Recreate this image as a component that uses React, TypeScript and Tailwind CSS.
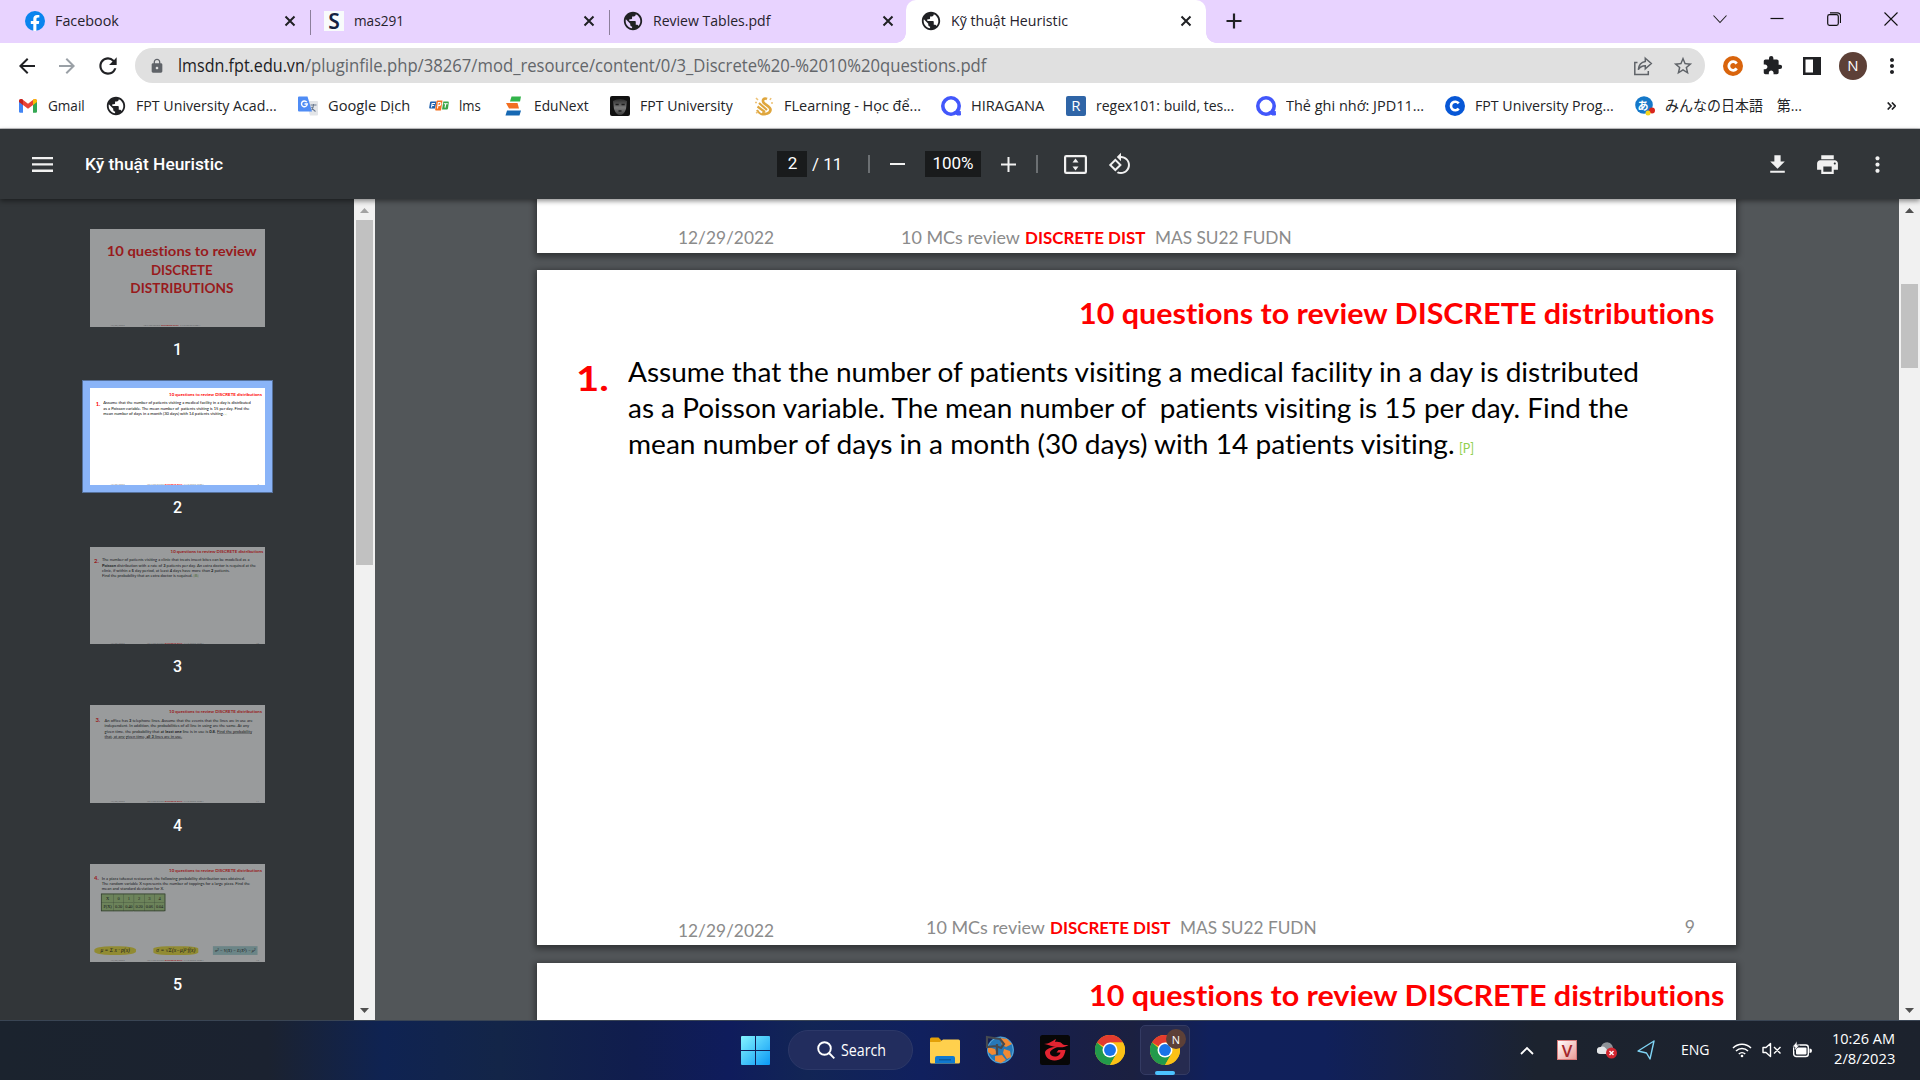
import { useLayoutEffect, useRef, type ReactNode } from "react";
import { MdPublic, MdArrowBack, MdArrowForward, MdRefresh, MdLock, MdStarBorder, MdExtension, MdMoreVert } from "react-icons/md";

/** One line of text, condensed or widened to fill the width of its box. */
function Fit({ className = "", children }: { className?: string; children: ReactNode }) {
  const box = useRef<HTMLSpanElement>(null);
  const line = useRef<HTMLSpanElement>(null);
  useLayoutEffect(() => {
    if (!box.current || !line.current) return;
    line.current.style.transform = `scaleX(${box.current.clientWidth / line.current.offsetWidth})`;
  }, []);
  return (
    <span ref={box} className={`block shrink-0 whitespace-pre ${className}`}>
      <span ref={line} className="inline-block origin-left">
        {children}
      </span>
    </span>
  );
}

const TabClose = () => (
  <svg viewBox="0 0 12 12" className="size-3 shrink-0" stroke="#202124" strokeWidth="2" fill="none">
    <path d="M1.5 1.5l9 9M10.5 1.5l-9 9" />
  </svg>
);

const FacebookIcon = () => (
  <svg viewBox="0 0 20 20" className="size-5 shrink-0">
    <circle cx="10" cy="10" r="10" fill="#0b84ee" />
    <path d="M13.8 12.9l.45-2.9h-2.8V8.1c0-.8.4-1.55 1.65-1.55h1.25V4.1s-1.15-.2-2.25-.2c-2.3 0-3.8 1.4-3.8 3.9V10H5.8v2.9h2.5V20a10 10 0 003.1 0v-7.1z" fill="#fff" />
  </svg>
);

const SIcon = () => (
  <span className="grid size-5 shrink-0 place-items-center bg-[#f8fbfb] font-['Noto_Sans'] text-[21px] font-semibold leading-none text-[#14213f]">S</span>
);

const Globe = () => <MdPublic className="size-[22px] shrink-0 -mx-px text-[#202124]" />;

function Tab({ className, icon, title, w }: { className: string; icon: ReactNode; title: string; w: string }) {
  return (
    <div className={`flex h-[43px] shrink-0 items-center pb-[2px] ${className}`}>
      {icon}
      <Fit className={`mb-px ml-2.5 font-['Open_Sans'] text-[15px] leading-5 text-[#26222c] ${w}`}>{title}</Fit>
      <span className="ml-auto" />
      <TabClose />
    </div>
  );
}

function TabStrip() {
  return (
    <div className="flex h-[43px] bg-[#e8d3ff]">
      <Tab className="w-[285px] ml-[25px] pr-[14px]" icon={<FacebookIcon />} title="Facebook" w="w-[64px]" />
      <span className="mt-2.5 h-[25px] w-px bg-[#8c7f9b]" />
      <Tab className="w-[298px] pl-[13px] pr-[14px]" icon={<SIcon />} title="mas291" w="w-[50px]" />
      <span className="mt-2.5 h-[25px] w-px bg-[#8c7f9b]" />
      <Tab className="w-[296px] pl-[13px] pr-[12px]" icon={<Globe />} title="Review Tables.pdf" w="w-[117px]" />
      <div className="relative w-[300px] rounded-t-[10px] bg-white">
        <span className="absolute -left-2.5 bottom-0 size-2.5 bg-[radial-gradient(circle_at_0_0,transparent_9.5px,#fff_10px)]" />
        <span className="absolute -right-2.5 bottom-0 size-2.5 bg-[radial-gradient(circle_at_100%_0,transparent_9.5px,#fff_10px)]" />
        <Tab className="w-[300px] pl-[15px] pr-[14px]" icon={<Globe />} title="Kỹ thuật Heuristic" w="w-[117px]" />
      </div>
      <svg viewBox="0 0 16 16" className="ml-5 mt-[13px] size-4" stroke="#202124" strokeWidth="2.2" fill="none">
        <path d="M8 .5v15M.5 8h15" />
      </svg>
      <svg viewBox="0 0 14 14" className="ml-auto mt-3 size-3.5" stroke="#222" strokeWidth="1.1" fill="none">
        <path d="M.5 3.500L7 10.500l6.500-7" />
      </svg>
      <svg viewBox="0 0 14 14" className="ml-[43px] mt-3 size-3.5" stroke="#111" strokeWidth="1.2" fill="none">
        <path d="M.5 6.500h13" />
      </svg>
      <svg viewBox="0 0 14 14" className="ml-[43px] mt-3 size-3.5" stroke="#111" strokeWidth="1.2" fill="none">
        <rect x=".7" y="2.7" width="10.6" height="10.6" rx="1.8" />
        <path d="M3 .8h7.500a3 3 0 013 3V11" />
      </svg>
      <svg viewBox="0 0 14 14" className="ml-[43px] mr-[22px] mt-3 size-3.5" stroke="#111" strokeWidth="1.1" fill="none">
        <path d="M.5 .5l13 13M13.500 .5l-13 13" />
      </svg>
    </div>
  );
}

function AddressBar() {
  return (
    <div className="flex h-[45px] items-center bg-white text-[#202124]">
      <MdArrowBack className="ml-[15px] size-6" />
      <MdArrowForward className="ml-4 size-6 text-[#9aa0a6]" />
      <MdRefresh className="ml-4 size-[26px]" />
      <div className="ml-[14px] flex h-[35px] w-[1570px] items-center rounded-full bg-[#e0e0e0] pl-[14px] pr-[11px] font-['Open_Sans'] text-[17.5px] leading-6">
        <MdLock className="size-4 text-[#5f6368]" />
        <Fit className="mb-0.5 ml-[13px] w-[127px]">lmsdn.fpt.edu.vn</Fit>
        <Fit className="mb-0.5 w-[681px] text-[#63666a]">/pluginfile.php/38267/mod_resource/content/0/3_Discrete%20-%2010%20questions.pdf</Fit>
        <svg viewBox="0 0 20 20" className="ml-auto size-5" stroke="#5f6368" strokeWidth="1.5" fill="none">
          <path d="M4.500 6.500H1.800v12h13.500v-3.500M12.300 2.200l6 5.300-6 5.300V9.700C9 9.700 6.900 10.800 5.300 13.700c.4-4.500 2.800-7.700 7-8.300z" />
        </svg>
        <MdStarBorder className="ml-[19px] size-[22px] text-[#5f6368]" />
      </div>
      <svg viewBox="0 0 20 20" className="ml-[18px] size-5">
        <circle cx="10" cy="10" r="10" fill="#d9640c" />
        <path d="M13.700 12.400a4.300 4.300 0 110-4.800" stroke="#fff" strokeWidth="2.800" fill="none" />
      </svg>
      <MdExtension className="ml-[19px] size-[21px]" />
      <svg viewBox="0 0 18 18" className="ml-[20px] size-[18px]">
        <path d="M0 0h18v18H0zM2.500 2.500v13h7.500v-13z" fill="#202124" fillRule="evenodd" />
      </svg>
      <span className="ml-[18px] grid size-7 place-items-center rounded-full bg-[#5d4037] font-['Open_Sans'] text-[15px] text-white">N</span>
      <MdMoreVert className="ml-[13px] size-6" />
    </div>
  );
}

const QIcon = () => (
  <svg viewBox="0 0 20 20" className="size-5 shrink-0" fill="none" stroke="#4257fb" strokeWidth="3.600">
    <circle cx="10" cy="10" r="8.200" />
    <path d="M13 15.500l3 3.500h3.500l-.3-4" fill="#4257fb" strokeWidth="1" />
  </svg>
);

const bookmarks: { label: string; slot: string; w: string; icon: ReactNode }[] = [
  {
    label: "Gmail", slot: "w-[88px]", w: "w-[37px]",
    icon: (
      <svg viewBox="0 0 20 20" className="size-5 shrink-0">
        <path d="M1 5v10.500c0 .8.500 1.200 1.200 1.200H5V8z" fill="#4285f4" />
        <path d="M15 8v8.700h2.800c.7 0 1.200-.4 1.200-1.200V5z" fill="#34a853" />
        <path d="M1 5.200C1 3.300 3 2.500 4.500 3.500L10 7.700l5.500-4.200C17 2.500 19 3.300 19 5.200L15 9l-5 3.700L5 9z" fill="#ea4335" />
        <path d="M15 4v5l4-3V5.200c0-1.900-2-2.700-3.500-1.700z" fill="#fbbc04" />
        <path d="M1 5.200V6l4 3V4l-.5-.5C3 2.500 1 3.300 1 5.200z" fill="#c5221f" />
      </svg>
    ),
  },
  { label: "FPT University Acad...", slot: "w-[192px]", w: "w-[141px]", icon: <Globe /> },
  {
    label: "Google Dịch", slot: "w-[131px]", w: "w-[82px]",
    icon: (
      <svg viewBox="0 0 20 20" className="size-5 shrink-0">
        <path d="M8 5h11a1 1 0 011 1v12.500a1 1 0 01-1 1h-7z" fill="#e3e5e8" />
        <path d="M1 .5h8.500L14 15.500H1a1 1 0 01-1-1v-13a1 1 0 011-1z" fill="#4f8cf5" />
        <path d="M8.800 6.200A2.900 2.900 0 109.300 8H6.500" stroke="#fff" strokeWidth="1.400" fill="none" />
        <path d="M12.500 9h6M15.500 8v1c0 2-1.500 4-2 4.500M13.500 11c1 2 2.500 3.500 4 4.500" stroke="#6b7a90" strokeWidth="1.100" fill="none" />
      </svg>
    ),
  },
  {
    label: "lms", slot: "w-[75px]", w: "w-[22px]",
    icon: (
      <svg viewBox="0 0 20 20" className="size-5 shrink-0">
        <path d="M2 5.500h5.500L6 12.500H1q-1 0-.8-1L1 6.500q.2-1 1-1z" fill="#1d5fae" />
        <path d="M8.500 4.500h5L12 14.500H7q-1 0-.8-1L7.500 5.500q.2-1 1-1z" fill="#f37021" />
        <path d="M14.300 5.500H19q1 0 .8 1l-.8 6q-.2 1-1 1h-5z" fill="#3aa648" />
        <path d="M2.500 11.500l.6-4h3M2.800 9.500h2.400M8.500 12.500L9.300 6.500q3-.3 2.500 1.500T9 9.800M14.800 7.700h4M16.800 7.700l-.8 4" stroke="#fff" strokeWidth="1.100" fill="none" />
      </svg>
    ),
  },
  {
    label: "EduNext", slot: "w-[106px]", w: "w-[55px]",
    icon: (
      <svg viewBox="0 0 20 20" className="size-5 shrink-0">
        <path d="M7.500 .5H17l-1 5H6z" fill="#32b44a" />
        <path d="M2 7h11.500l1.500 5.500H5z" fill="#f26f21" />
        <path d="M3 14.500h14l-1.500 5H1.500z" fill="#1668b3" />
      </svg>
    ),
  },
  {
    label: "FPT University", slot: "w-[144px]", w: "w-[93px]",
    icon: (
      <svg viewBox="0 0 20 20" className="size-5 shrink-0">
        <defs>
          <linearGradient id="face" x1="0" y1="0" x2="0" y2="1">
            <stop stopColor="#2a2a2a" />
            <stop offset=".55" stopColor="#7a7a7a" />
            <stop offset="1" stopColor="#3a3a3a" />
          </linearGradient>
        </defs>
        <rect width="20" height="20" rx="2" fill="#111" />
        <path d="M3 5q7-4 14 0l-1 8q-2 6-6 6t-6-6z" fill="url(#face)" />
        <path d="M5.500 8.500h3.200M11.500 8.500h3.200M8.500 15h3" stroke="#1c1c1c" strokeWidth="1.300" />
      </svg>
    ),
  },
  {
    label: "FLearning - Học để...", slot: "w-[187px]", w: "w-[137px]",
    icon: (
      <svg viewBox="0 0 20 20" className="size-5 shrink-0" fill="none" stroke="#dfa63d">
        <path d="M13 3c-3-1.500-5 1-3.500 3.500S17 10.500 16.500 14s-5 5-8.500 3" strokeWidth="2.600" />
        <path d="M5 7l8 7M3.500 10.500l7.500 5.500M3 14c2 4 6 5 9 4" strokeWidth="2.200" />
        <path d="M2 2l2 2M17 2l-1 2M1 6.500h2M17 7h2M2 17l2-1" strokeWidth="1.600" stroke="#edc277" />
      </svg>
    ),
  },
  { label: "HIRAGANA", slot: "w-[125px]", w: "w-[73px]", icon: <QIcon /> },
  {
    label: "regex101: build, tes...", slot: "w-[190px]", w: "w-[138px]",
    icon: <span className="grid size-5 shrink-0 place-items-center rounded-[2px] bg-[#2f65a7] font-['Open_Sans'] text-[15px] leading-none text-white">R</span>,
  },
  { label: "Thẻ ghi nhớ: JPD11...", slot: "w-[189px]", w: "w-[138px]", icon: <QIcon /> },
  {
    label: "FPT University Prog...", slot: "w-[190px]", w: "w-[139px]",
    icon: (
      <svg viewBox="0 0 20 20" className="size-5 shrink-0">
        <circle cx="10" cy="10" r="10" fill="#0757d6" />
        <path d="M13.700 12.600a4.300 4.300 0 110-5.200" stroke="#fff" strokeWidth="2.600" fill="none" />
      </svg>
    ),
  },
  {
    label: "みんなの日本語　第...", slot: "w-[180px]", w: "w-[137px]",
    icon: (
      <span className="relative grid size-5 shrink-0 place-items-center">
        <svg viewBox="0 0 20 20" className="absolute inset-0 size-5">
          <circle cx="9" cy="9" r="8.800" fill="#1578c9" />
          <circle cx="17" cy="14.500" r="3" fill="#d9261c" />
          <circle cx="13" cy="17" r="2.500" fill="#f7d51d" />
        </svg>
        <span className="relative mr-1 font-['Noto_Sans_CJK_JP'] text-[11px] font-bold leading-none text-white">あ</span>
      </span>
    ),
  },
];

function BookmarksBar() {
  return (
    <div className="flex h-[41px] items-center border-b border-[#c4c4c6] bg-white pb-[5px] pl-[18px]">
      {bookmarks.map((b) => (
        <div key={b.label} className={`flex shrink-0 items-center gap-2.5 ${b.slot}`}>
          {b.icon}
          <Fit className={`mb-0.5 font-['Open_Sans','Noto_Sans_CJK_JP'] text-[15px] leading-5 text-[#232427] ${b.w}`}>{b.label}</Fit>
        </div>
      ))}
      <svg viewBox="0 0 9 8" className="ml-auto mr-6 h-2 w-[9px]" stroke="#202124" strokeWidth="1.700" fill="none">
        <path d="M.7 .5L4 4 .7 7.500M4.900 .5L8.200 4 4.900 7.500" />
      </svg>
    </div>
  );
}

function PdfToolbar() {
  return (
    <div className="relative z-10 flex h-[70px] items-center bg-[#323639] font-[Roboto] text-[#f1f1f1] shadow-[0_2px_5px_rgba(0,0,0,0.45)]">
      <svg viewBox="0 0 21 15" className="ml-8 h-[15px] w-[21px]" fill="#f1f1f1">
        <path d="M0 0h21v2.300H0zM0 6.300h21v2.300H0zM0 12.600h21V15H0z" />
      </svg>
      <Fit className="ml-8 w-[138px] text-[17px] font-medium leading-5 text-white">Kỹ thuật Heuristic</Fit>
      <span className="ml-[554px] grid h-[26px] w-[30px] place-items-center bg-[#191b1c] pb-px pl-px text-[17px] leading-none text-white">2</span>
      <Fit className="mb-px ml-[5px] w-[30px] text-[17px] leading-5 text-white">/ 11</Fit>
      <span className="ml-[26px] h-[18px] w-[2px] bg-[#6c7073]" />
      <span className="ml-5 h-[2px] w-[15px] bg-[#f1f1f1]" />
      <span className="ml-5 grid h-[26px] w-14 place-items-center bg-[#191b1c] pb-0.5 text-[17px] leading-none text-white">100%</span>
      <svg viewBox="0 0 15 15" className="ml-5 size-[15px]" fill="#f1f1f1">
        <path d="M6.500 0h2v6.500H15v2H8.500V15h-2V8.500H0v-2h6.500z" />
      </svg>
      <span className="ml-5 h-[18px] w-[2px] bg-[#6c7073]" />
      <svg viewBox="0 0 23 19" className="ml-[26px] h-[19px] w-[23px]">
        <rect x="1.100" y="1.100" width="20.800" height="16.800" rx="1.200" stroke="#f1f1f1" strokeWidth="2.200" fill="none" />
        <path d="M8.500 7.500h6L11.500 3.500zM8.500 11.500h6L11.500 15.500z" fill="#f1f1f1" />
      </svg>
      <svg viewBox="0 0 24 24" className="ml-[21px] size-6" fill="#f1f1f1">
        <path d="M7.340 6.410L.86 12.900l6.490 6.480 6.490-6.480-6.500-6.490zM3.690 12.900l3.660-3.660L11 12.900l-3.660 3.660-3.650-3.660zm15.670-6.260C17.610 4.880 15.300 4 13 4V.76L8.760 5 13 9.240V6c1.790 0 3.580.68 4.950 2.050 2.730 2.730 2.730 7.170 0 9.900C16.580 19.320 14.790 20 13 20c-.97 0-1.940-.21-2.840-.61l-1.490 1.490C10.020 21.620 11.510 22 13 22c2.300 0 4.610-.88 6.360-2.640 3.520-3.510 3.520-9.210 0-12.720z" />
      </svg>
      <svg viewBox="0 0 24 24" className="ml-auto size-[25px]" fill="#f1f1f1">
        <path d="M19 9h-4V3H9v6H5l7 7 7-7zM5 18v2h14v-2H5z" />
      </svg>
      <svg viewBox="0 0 24 24" className="ml-[25px] size-[25px]" fill="#f1f1f1">
        <path d="M19 8H5c-1.660 0-3 1.340-3 3v6h4v4h12v-4h4v-6c0-1.660-1.340-3-3-3zm-3 11H8v-5h8v5zm3-7c-.55 0-1-.45-1-1s.45-1 1-1 1 .45 1 1-.45 1-1 1zm-1-9H6v4h12V3z" />
      </svg>
      <MdMoreVert className="ml-[25px] mr-[30px] size-[25px]" />
    </div>
  );
}

function SlideFooter({ first, page }: { first?: boolean; page?: string }) {
  return (
    <div className={`absolute bottom-0 left-0 flex w-full items-start pl-[141px] text-[17.5px] leading-6 text-[#8b8b8b] ${first ? "h-[27px]" : "h-[29px]"}`}>
      <Fit className={`w-24 ${first ? "" : "mt-[3px]"}`}>12/29/2022</Fit>
      <Fit className={`w-[119px] ${first ? "ml-[127px]" : "ml-[152px]"}`}>10 MCs review</Fit>
      <Fit className="ml-[5px] w-[120px] font-bold text-[#fe0000]">DISCRETE DIST</Fit>
      <Fit className="ml-[10px] w-[137px]">MAS SU22 FUDN</Fit>
      {page && <span className="ml-auto mr-[41px] -mt-px">{page}</span>}
    </div>
  );
}

const SlideTitle = ({ className }: { className: string }) => (
  <Fit className={`w-[635px] text-[28.5px] font-bold leading-10 text-[#fe0000] ${className}`}>10 questions to review DISCRETE distributions</Fit>
);

const SlideNumber = ({ className, children }: { className: string; children: string }) => (
  <Fit className={`-ml-1 w-[33px] text-[34px] font-bold leading-10 text-[#fe0000] ${className}`}>{children}</Fit>
);

const slideShell = "relative flex h-[675px] w-[1199px] shrink-0 flex-col overflow-hidden bg-white font-[Lato] text-black [font-variant-ligatures:none]";
const bodyText = "text-[26px] leading-9";

function CoverSlide() {
  return (
    <div className={slideShell}>
      <div className="mt-[85px] flex flex-col pl-[114px] text-[93px] font-bold leading-[128px] text-[#fe0000]">
        <Fit className="w-[1028px]">10 questions to review</Fit>
        <Fit className="ml-[304px] w-[422px]">DISCRETE</Fit>
        <Fit className="ml-[162px] w-[708px]">DISTRIBUTIONS</Fit>
      </div>
      <SlideFooter first />
    </div>
  );
}

function PoissonSlide() {
  return (
    <div className={slideShell}>
      <SlideTitle className="ml-[542px] mt-[23px]" />
      <div className="mt-[21px] flex pl-[43px]">
        <SlideNumber className="mt-1">1.</SlideNumber>
        <div className={`ml-[19px] ${bodyText}`}>
          <Fit className="w-[1011px]">Assume that the number of patients visiting a medical facility in a day is distributed</Fit>
          <Fit className="w-[1001px]">as a Poisson variable. The mean number of  patients visiting is 15 per day. Find the</Fit>
          <div className="flex">
            <Fit className="w-[827px]">mean number of days in a month (30 days) with 14 patients visiting.</Fit>
            <Fit className="ml-1 w-[15px] pt-[5px] text-[12.5px] text-[#92d050]">[P]</Fit>
          </div>
        </div>
      </div>
      <SlideFooter page="9" />
    </div>
  );
}

function ClinicSlide() {
  return (
    <div className={slideShell}>
      <SlideTitle className="ml-[552px] mt-[12px]" />
      <div className="mt-[18px] flex pl-8">
        <SlideNumber className="mt-1">2.</SlideNumber>
        <div className={`ml-[21px] ${bodyText}`}>
          <Fit className="w-[1010px]">The number of patients visiting a clinic that treats insect bites can be modelled as a</Fit>
          <Fit className="w-[1055px]"><b>Poisson</b> distribution with a rate of <b>3</b> patients per day. An extra doctor is required at the</Fit>
          <Fit className="w-[875px]">clinic, if within a <b>5</b> day period, at least <b>4</b> days have more than <b>2</b> patients.</Fit>
          <Fit className="w-[662px] underline">Find the probability that an extra doctor is required.<span className="text-[#5c9a26]"> [B]</span></Fit>
        </div>
      </div>
      <SlideFooter page="10" />
    </div>
  );
}

function TelephoneSlide() {
  return (
    <div className={slideShell}>
      <SlideTitle className="ml-[542px] mt-[23px]" />
      <div className="mt-[27px] flex pl-[41px]">
        <SlideNumber className="-mt-1">3.</SlideNumber>
        <div className={`ml-[30px] ${bodyText}`}>
          <Fit className="w-[1014px]">An office has <b>3</b> telephone lines. Assume that the events that the lines are in use are</Fit>
          <Fit className="w-[991px]">independent. In addition, the probabilities of all line in using are the same. At any</Fit>
          <Fit className="w-[1010px]">given time, the probability that <b>at least one</b> line is in use is <b>0.8</b>. <u>Find the probability</u></Fit>
          <Fit className="w-[532px]"><u>that, at any given time, <b>all 3</b> lines are in use.</u></Fit>
        </div>
      </div>
      <SlideFooter page="11" />
    </div>
  );
}

function PizzaSlide() {
  return (
    <div className={slideShell}>
      <SlideTitle className="ml-[542px] mt-[23px]" />
      <div className="mt-[18px] flex pl-8">
        <SlideNumber className="-mt-1">4.</SlideNumber>
        <div className={`ml-[19px] ${bodyText}`}>
          <Fit className="w-[982px]">In a pizza takeout restaurant, the following probability distribution was obtained.</Fit>
          <Fit className="w-[1016px]">The random variable X represents the number of toppings for a large pizza. Find the</Fit>
          <Fit className="w-[427px]">mean and standard deviation for X.</Fit>
        </div>
      </div>
      <div className="ml-[75px] mt-[14px] grid h-[120px] w-[441px] grid-cols-[82px_repeat(5,1fr)] border-4 border-[#1e2a16] bg-[#a6cf7c] text-center font-['Liberation_Serif'] text-[31px] leading-[56px]">
        {["X", "0", "1", "2", "3", "4", "P(X)", "0.30", "0.40", "0.20", "0.06", "0.04"].map((c) => (
          <span key={c} className="border border-[#33452a] tracking-tighter">{c}</span>
        ))}
      </div>
      <div className="mt-auto mb-[50px] flex h-[64px] items-center pl-[30px] font-['Liberation_Serif'] text-[38px] italic leading-[60px]">
        <span className="w-[285px] rounded-[40%] bg-[#f0df2c] text-center">μ = Σ x · p(x)</span>
        <span className="ml-[119px] w-[308px] rounded-[30%] bg-[#f0df2c] text-center">σ = √Σ(x−μ)²·f(x)</span>
        <span className="ml-[100px] w-[306px] bg-[#a5d3d4] text-center text-[30px]">σ² = V(X) = E(X²) − μ²</span>
      </div>
      <SlideFooter page="12" />
    </div>
  );
}

function Thumb({ n, active, children }: { n: number; active?: boolean; children: ReactNode }) {
  return (
    <div className="flex h-[158.8px] shrink-0 flex-col items-center">
      <div className={`p-2 ${active ? "bg-[#8ab4f8] shadow-[inset_0_0_0_1px_#56719b]" : ""}`}>
        <div className="h-[97.5px] w-[175px] overflow-hidden">
          <div className={`origin-top-left scale-[0.14595] ${active ? "" : "opacity-50"}`}>{children}</div>
        </div>
      </div>
      <span className="mt-[3px] font-[Roboto] text-[16px] font-medium leading-6 text-white">{n}</span>
    </div>
  );
}

function Scrollbar({ before, thumb, dimUp }: { before: string; thumb: string; dimUp?: boolean }) {
  return (
    <div className="flex w-[21px] shrink-0 flex-col items-center bg-[#f1f1f1]">
      <svg viewBox="0 0 9 5" className="mt-[9px] h-[5px] w-[9px] shrink-0" fill={dimUp ? "#a3a3a3" : "#505050"}>
        <path d="M4.500 0L9 5H0z" />
      </svg>
      <span className={`w-[17px] bg-[#c1c1c1] ${before} ${thumb}`} />
      <svg viewBox="0 0 9 5" className="mb-[7px] mt-auto h-[5px] w-[9px] shrink-0" fill="#505050">
        <path d="M4.500 5L9 0H0z" />
      </svg>
    </div>
  );
}

function Viewer() {
  const shadow = "shrink-0 shadow-[0_2px_6px_2px_rgba(0,0,0,0.4)]";
  return (
    <div className="flex h-[821px] overflow-hidden bg-[#525659]">
      <div className="flex w-[354px] flex-col items-start overflow-hidden bg-[#323639] pl-[82px] pt-[22px]">
        <Thumb n={1}><CoverSlide /></Thumb>
        <Thumb n={2} active><PoissonSlide /></Thumb>
        <Thumb n={3}><ClinicSlide /></Thumb>
        <Thumb n={4}><TelephoneSlide /></Thumb>
        <Thumb n={5}><PizzaSlide /></Thumb>
      </div>
      <Scrollbar before="mt-[7px]" thumb="h-[345px]" dimUp />
      <div className="flex w-[1524px] flex-col gap-[17px] overflow-hidden pl-[162px]">
        <div className={`relative h-[54px] w-[1199px] bg-white font-[Lato] [font-variant-ligatures:none] ${shadow}`}>
          <SlideFooter first />
        </div>
        <div className={`w-[1199px] ${shadow}`}><PoissonSlide /></div>
        <div className={`mt-px w-[1199px] ${shadow}`}><ClinicSlide /></div>
      </div>
      <Scrollbar before="mt-[71px]" thumb="h-[84px]" />
    </div>
  );
}

const Chrome = () => (
  <svg viewBox="0 0 48 48" className="size-[30px]">
    <circle cx="24" cy="24" r="24" fill="#fbc116" />
    <path d="M24 24L3.200 12A24 24 0 0144.800 12H24z" fill="#e33b2e" />
    <path d="M3.200 12A24 24 0 0024 48l10.400-18H24z" fill="#229a4b" />
    <path d="M24 48l10.400-18A12 12 0 0034.400 18 12 12 0 0024 12h20.800A24 24 0 0124 48z" fill="#fbc116" />
    <circle cx="24" cy="24" r="12" fill="#fff" />
    <circle cx="24" cy="24" r="9.500" fill="#1a73e8" />
  </svg>
);

function Taskbar() {
  return (
    <div className="flex h-[60px] items-center border-t border-[#3a4554] bg-[linear-gradient(90deg,#1b232e_0%,#1b2230_14%,#0f2352_20%,#132548_26%,#101d4e_33%,#0f1c5c_38%,#122555_42%,#10205e_48%,#161e4e_53%,#1b2040_59%,#10205c_63%,#10205a_69%,#182240_76%,#1c232f_80%,#1c222d_100%)] pb-px font-['Open_Sans'] text-white">
      <svg viewBox="0 0 29 29" className="ml-[741px] size-[29px]">
        <defs>
          <linearGradient id="win" x1="0" y1="0" x2="29" y2="29" gradientUnits="userSpaceOnUse">
            <stop stopColor="#84f4ff" />
            <stop offset="1" stopColor="#0a98f5" />
          </linearGradient>
        </defs>
        <path d="M1 0h13v14H0V1a1 1 0 011-1zM15 0h13a1 1 0 011 1v13H15zM0 15h14v14H1a1 1 0 01-1-1zM15 15h14v13a1 1 0 01-1 1H15z" fill="url(#win)" />
      </svg>
      <div className="ml-[18px] flex h-10 w-[125px] items-center rounded-full border border-[#2c3868] bg-[#222d5e] pl-7">
        <svg viewBox="0 0 18 18" className="size-[18px]" stroke="#fff" strokeWidth="1.900" fill="none">
          <circle cx="7.500" cy="7.500" r="6.300" />
          <path d="M12 12l5.300 5.300" />
        </svg>
        <Fit className="mb-px ml-[6px] w-[45px] text-[15.5px] leading-5">Search</Fit>
      </div>
      <svg viewBox="0 0 30 27" className="ml-[17px] h-[27px] w-[30px]">
        <path d="M0 2a1.500 1.500 0 011.500-1.500h7L12 4h2v4H0z" fill="#e3a007" />
        <path d="M0 5h10l3-2.500h15.500A1.500 1.500 0 0130 4v21a1.500 1.500 0 01-1.500 1.500h-27A1.500 1.500 0 010 25z" fill="#ffd04d" />
        <path d="M5 26.500V21a2 2 0 012-2h16a2 2 0 012 2v5.500z" fill="#1079cf" />
        <path d="M9 22.800h12" stroke="#0a5594" strokeWidth="1.200" />
      </svg>
      <svg viewBox="0 0 30 30" className="ml-[25px] size-[30px]">
        <circle cx="15.500" cy="15" r="13.500" fill="#2678b8" />
        <circle cx="15.500" cy="15" r="12.800" fill="none" stroke="#5ba6d8" strokeWidth="1" />
        <path d="M15 3l7 1 5 5-6 3-4-2zM3 12l7 2 2 5-5 1-4-3zM19 14l6 2 1 6-4 2-4-6zM10 21l7-1 4 5-5 3-6-2z" fill="#f08a35" />
        <path d="M2 2l13 2 4 5-3 4-5-2-9 1zM12 9v11" stroke="#464a50" strokeWidth="2.200" fill="none" />
      </svg>
      <svg viewBox="0 0 30 30" className="ml-[25px] size-[30px]">
        <rect width="30" height="30" rx="2.500" fill="#070707" />
        <path d="M4 9c5 0 8-3 12-5l-1 3c3-.5 6 0 8 2.500 2 .8 4 .6 5.500.5-3 2-6 2.500-10 2.200C12 12 9 9.500 4 9z" fill="#e32431" />
        <path d="M5 17c2-4 7-5.500 13-5-5 1.500-8 3.500-8 6 0 2.500 3 4 6 3.500 2.500-.5 4-2 4.500-4h-4l2-2.500h7c-1 7-4.500 10.500-11 10.500-6 0-9.500-4-9.500-8.500z" fill="#e32431" />
      </svg>
      <span className="ml-[25px]"><Chrome /></span>
      <div className="relative ml-[15px] grid h-[50px] w-[50px] place-items-center rounded-[5px] border border-[#343b63] bg-[#262b50]">
        <Chrome />
        <span className="absolute left-[25px] top-[3px] grid size-5 place-items-center rounded-full bg-[#5d4037] text-[11px] leading-none">N</span>
        <span className="absolute -bottom-px left-3.5 h-1 w-5 rounded-full bg-[#4cc2ff]" />
      </div>
      <svg viewBox="0 0 14 9" className="ml-[330px] h-[9px] w-3.5" stroke="#fff" strokeWidth="1.800" fill="none">
        <path d="M1 8l6-6 6 6" />
      </svg>
      <span className="ml-[23px] grid size-5 place-items-center border border-[#d77b7b] bg-linear-to-br from-white to-[#e79b97] text-[17px] font-semibold leading-none text-[#a3272b]">V</span>
      <svg viewBox="0 0 20 18" className="ml-5 h-[18px] w-5">
        <path d="M4 7A6 6 0 0115 4l2 5-7 5z" fill="#8f9398" />
        <path d="M3 13a3.500 3.500 0 01.5-7C7 4.500 9 7 10 9l3 4z" fill="#e4e6e8" />
        <circle cx="14.500" cy="12" r="5.500" fill="#d22630" />
        <path d="M12.500 10l4 4M16.500 10l-4 4" stroke="#fff" strokeWidth="1.400" />
      </svg>
      <svg viewBox="0 0 18 20" className="ml-5 h-5 w-[18px]" stroke="#7fd4f5" strokeWidth="1.400" fill="none" strokeLinejoin="round">
        <path d="M17 1L1 11l8.500 2L13 19z" />
      </svg>
      <Fit className="mb-0.5 ml-[26px] w-[29px] text-[15px] leading-5">ENG</Fit>
      <svg viewBox="0 0 20 16" className="ml-[22px] h-4 w-5" stroke="#fff" strokeWidth="1.500" fill="none">
        <path d="M1 6a12.500 12.500 0 0118 0M4 9a8.400 8.400 0 0112 0M6.800 12a4.600 4.600 0 016.400 0" />
        <circle cx="10" cy="14" r="1.300" fill="#fff" stroke="none" />
      </svg>
      <svg viewBox="0 0 20 16" className="ml-2.5 h-4 w-5" stroke="#fff" strokeWidth="1.400" fill="none" strokeLinejoin="round">
        <path d="M1 5.500h3L8.500 1.500v13L4 10.500H1zM12 5l6.500 6.500M18.500 5L12 11.500" />
      </svg>
      <svg viewBox="0 0 20 17" className="mb-0.5 ml-2.5 h-[17px] w-5">
        <rect x="1.700" y="4" width="14.600" height="11.500" rx="2.500" fill="none" stroke="#fff" strokeWidth="1.400" />
        <rect x="4" y="6.500" width="10.500" height="7" rx="1" fill="#fff" />
        <path d="M17.500 7.500q2.500 0 2.500 2.200t-2.500 2.200z" fill="#fff" />
        <path d="M5 0L.5 6H3l-.5 4L7.500 4H5z" fill="#fff" stroke="#1c222d" strokeWidth=".6" />
      </svg>
      <div className="mb-0.5 ml-auto mr-[25px] flex flex-col items-end text-[14.5px] leading-5">
        <Fit className="w-[63px]">10:26 AM</Fit>
        <Fit className="w-[61px]">2/8/2023</Fit>
      </div>
    </div>
  );
}

export default function App() {
  return (
    <div className="h-[1080px] w-[1920px] overflow-hidden bg-white">
      <TabStrip />
      <AddressBar />
      <BookmarksBar />
      <PdfToolbar />
      <Viewer />
      <Taskbar />
    </div>
  );
}
